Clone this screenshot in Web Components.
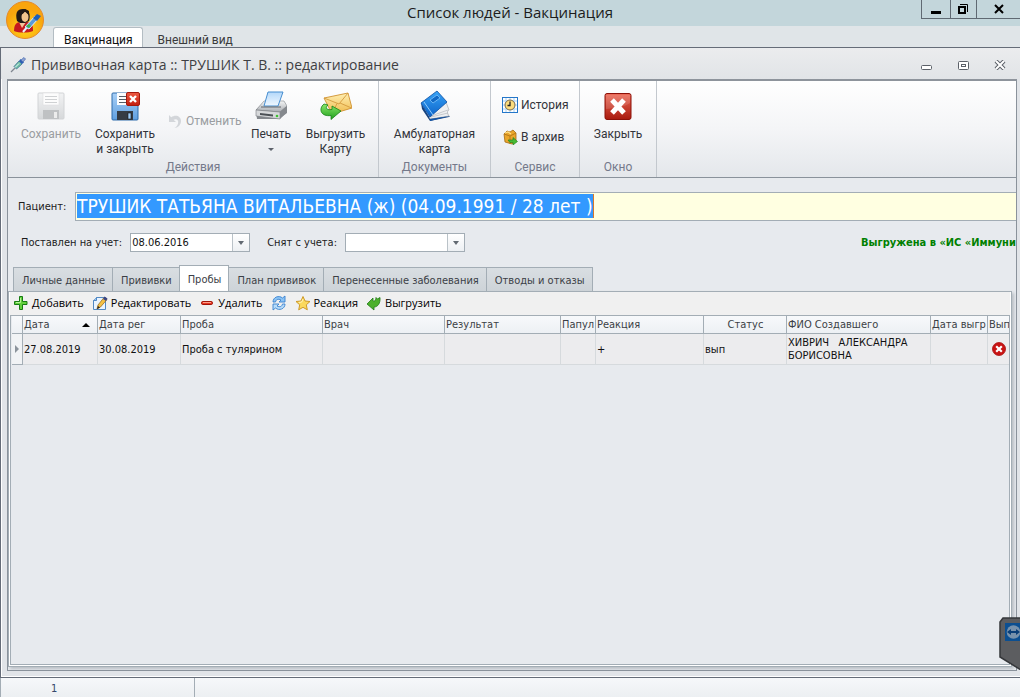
<!DOCTYPE html>
<html lang="ru">
<head>
<meta charset="utf-8">
<title>Список людей - Вакцинация</title>
<style>
  html, body { margin: 0; height: 100%; }
  body {
    --ui: Roboto, "Open Sans", sans-serif;
    --title: "Open Sans", "Noto Sans", sans-serif;
    --form: "DejaVu Sans Condensed", "DejaVu Sans", sans-serif;
    --line: #a3adb5;
    --face: #e7eaee;
    font: 12px/15px var(--ui);
    color: #3b3b3b;
    overflow: hidden;
  }
</style>
</head>
<body>
<app-shell>
  <ui-icon slot="logo" name="person" size="40"></ui-icon>
  <span slot="title">Список людей - Вакцинация</span>
  <app-tab slot="tabs" active>Вакцинация</app-tab>
  <app-tab slot="tabs">Внешний вид</app-tab>

  <card-window>
    <span slot="title">Прививочная карта :: ТРУШИК Т. В. :: редактирование</span>

    <ribbon-bar>
      <ribbon-group label="Действия">
        <ribbon-button icon="save" disabled style="--w:74px">Сохранить</ribbon-button>
        <ribbon-button icon="saveclose" style="--w:74px">Сохранить<br>и закрыть</ribbon-button>
        <ribbon-button icon="undo" small disabled style="--w:81px">Отменить</ribbon-button>
        <ribbon-button icon="print" menu style="--w:56px">Печать</ribbon-button>
        <ribbon-button icon="mail" style="--w:73px">Выгрузить<br>Карту</ribbon-button>
      </ribbon-group>
      <ribbon-group label="Документы">
        <ribbon-button icon="book" style="--w:99px">Амбулаторная<br>карта</ribbon-button>
      </ribbon-group>
      <ribbon-group label="Сервис" stack>
        <ribbon-button icon="history" small style="--w:76px">История</ribbon-button>
        <ribbon-button icon="archive" small style="--w:76px">В архив</ribbon-button>
      </ribbon-group>
      <ribbon-group label="Окно">
        <ribbon-button icon="close" style="--w:64px">Закрыть</ribbon-button>
      </ribbon-group>
    </ribbon-bar>

    <patient-form></patient-form>

    <tab-panel>
      <panel-tab slot="tabs">Личные данные</panel-tab>
      <panel-tab slot="tabs">Прививки</panel-tab>
      <panel-tab slot="tabs" active>Пробы</panel-tab>
      <panel-tab slot="tabs">План прививок</panel-tab>
      <panel-tab slot="tabs">Перенесенные заболевания</panel-tab>
      <panel-tab slot="tabs">Отводы и отказы</panel-tab>
      <tool-button slot="tools" icon="plus">Добавить</tool-button>
      <tool-button slot="tools" icon="edit">Редактировать</tool-button>
      <tool-button slot="tools" icon="minus">Удалить</tool-button>
      <tool-button slot="tools" icon="refresh" title="Обновить"></tool-button>
      <tool-button slot="tools" icon="star">Реакция</tool-button>
      <tool-button slot="tools" icon="export">Выгрузить</tool-button>
      <probe-grid></probe-grid>
    </tab-panel>
  </card-window>

  <span slot="status">1</span>
</app-shell>

<script>
const grad = (id, a, b) =>
  `<linearGradient id="${id}" x1="0" y1="0" x2="0" y2="1"><stop stop-color="${a}"/><stop offset="1" stop-color="${b}"/></linearGradient>`;

const floppy = `<rect x="3" y="3" width="26" height="27" rx="1" fill="url(#fl)" stroke="#2f6cab"/>
  <rect x="8" y="3" width="16" height="12" fill="#fbfcfd"/>
  <path d="M10 6.500H22M10 9.500H22M10 12.500H22" stroke="#555d66"/>
  <rect x="8" y="21" width="16" height="9" fill="#353c44"/><rect x="19" y="23" width="3" height="6" fill="#9ccaf5" stroke="#15191d" stroke-width=".6"/>`;

const ICONS = {
  save: [32, `<defs>${grad('g', '#f2f3f4', '#d6d8da')}</defs><rect x="3" y="3" width="26" height="26" rx="1" fill="url(#g)" stroke="#d2d4d6"/>
    <rect x="8" y="3" width="16" height="12" fill="#fcfcfc" stroke="#dcdddf" stroke-width=".6"/><path d="M10 6.500H22M10 9.500H22M10 12.500H22" stroke="#cfd1d3"/>
    <rect x="8" y="20" width="16" height="9" fill="#bfc1c3"/><rect x="19" y="22" width="3" height="6" fill="#ececec"/>`],
  saveclose: [32, `<defs>${grad('fl', '#a9d0f7', '#5f9fdf')}${grad('rd', '#ee5a42', '#c11d0e')}</defs>${floppy}
    <rect x="17.500" y="2.500" width="13" height="13" rx="1.500" fill="url(#rd)" stroke="#a5180c"/><path d="M21 6l6 6M27 6l-6 6" stroke="#fff" stroke-width="2.400"/>`],
  undo: [16, `<path d="M2 2v7h7L6.500 6.800C9.500 5 12 7 11 10.500 10.500 12.500 9 14 7.500 15 11.500 14.500 14 11.500 14 8 14 3 8.500 1 4.200 4.200z" fill="#d3d6da"/>`],
  print: [32, `<defs>${grad('p', '#f4f5f6', '#a9adb1')}${grad('pp', '#b4d8fa', '#f0f8ff')}</defs>
    <path d="M1 20L9 12h20l3 5v6l-8 6H2z" fill="#85898e"/><path d="M1 20L9 11h20l3 5-7 6z" fill="url(#p)" stroke="#83878b" stroke-width=".6"/>
    <path d="M1 20l24 2v7L1 26z" fill="#d6d8da" stroke="#777b80" stroke-width=".6"/><path d="M25 22l7-6v6l-7 7z" fill="#85898e"/>
    <path d="M13 2h15l-5 14H9z" fill="url(#pp)" stroke="#478ed0"/><path d="M6 17h20" stroke="#60656a"/>
    <path d="M5 23l13 1.500v2L5 25z" fill="#4b5055"/><circle cx="22" cy="26" r="1.300" fill="#3ec232"/>`],
  mail: [32, `<defs>${grad('m', '#fff0b4', '#f0b94a')}${grad('ga', '#8be86b', '#1e9f1c')}</defs>
    <path d="M4 8L28 3l4 15-20 6z" fill="url(#m)" stroke="#cf9130" stroke-width=".9"/><path d="M4 8l15 6 9-11M12 24l5-10.500M31.500 18L20 13" fill="none" stroke="#d49a3d" stroke-width=".9"/>
    <path d="M4 14c-6 5-3 13 7 11.500v4L21 21l-9-5v3.500c-6 1-7-2-4-4.500z" fill="url(#ga)" stroke="#168016" stroke-width=".8"/>`],
  book: [32, `<defs>${grad('bk', '#38a4f7', '#0b62c8')}</defs>
    <path d="M2 13l9 15 20-2-1 1-19 4-8-12z" fill="#17437e"/><path d="M11 29l-1-5 17-12 3 8c-2 1-2 3 0 6z" fill="#eef0f2" stroke="#9b9fa4" stroke-width=".6"/>
    <path d="M12 27l17-4M12 26l17-6" stroke="#b4b8bd" stroke-width=".7"/><path d="M31 26L11 31v-2z" fill="#1456a8"/>
    <path d="M2 13L18 1l10 11-17 15z" fill="url(#bk)" stroke="#0b4fa3" stroke-width=".8"/><path d="M5 12l9 13" stroke="#8fccfb"/><path d="M11 10l7-5 3 3-7 5z" fill="#1169c6" stroke="#7cc2fa" stroke-width=".8"/>`],
  history: [16, `<rect x=".5" y=".5" width="15" height="15" fill="#fff" stroke="#2577c9"/><path d="M1 4h14M1 8h14M1 12h14M4 1v14M8 1v14M12 1v14" stroke="#a6d1f5"/>
    <circle cx="8" cy="8" r="5" fill="#fbdc7c" stroke="#7a6a4a"/><path d="M8 4.500V8.500H5.500" fill="none" stroke="#222" stroke-width="1.300"/>`],
  archive: [16, `<path d="M2 5l3-3 3 1 3-2 3 3v8l-4 3-7-2z" fill="#eaa62b" stroke="#a36a12" stroke-width=".8"/><path d="M2 5l6 2 6-3M8 7v8" fill="none" stroke="#b97a18"/><path d="M3 4l3-1 3 2" fill="none" stroke="#ffe08a" stroke-width="1.200"/>
    <path d="M6 11h5V8.500l4.500 4L11 16v-2.500H8z" fill="#48ba35" stroke="#1b7d17" stroke-width=".6"/>`],
  close: [32, `<defs>${grad('cl', '#ec6b58', '#a91a0e')}</defs><rect x="3" y="3.500" width="26" height="26" rx="2" fill="url(#cl)" stroke="#8c1109"/>
    <path d="M4 5h24v8c-8 5-16 5-24 6z" fill="#fff" opacity=".13"/><path d="M10 10l12 13M22 10L10 23" stroke="#fff" stroke-width="5"/>`],
  plus: [16, `<path d="M6.500 1.500h3v5h4.500v3H9.500v5H6.500v-5H1.500v-3h5z" fill="#62d03d" stroke="#177b13"/><path d="M7.500 3v4.500H3" fill="none" stroke="#b5f397"/>`],
  edit: [16, `<path d="M4.500 2.500h9v12h-12v-9z" fill="#eaf4ff" stroke="#5288c2"/><path d="M4.500 2.500v3h-3" fill="#9cc7ef" stroke="#3472b8" stroke-width=".8"/>
    <path d="M5 14l1-4 6-7.500 3 2L8.500 12z" fill="#f6c143" stroke="#8b5f17" stroke-width=".7"/><path d="M11 4l1.500-2.500 3 2L14 6z" fill="#3c4785"/><path d="M5 14l1-3 2 1.500z" fill="#222"/>`],
  minus: [16, `<rect x="2.500" y="6.500" width="11" height="3" rx="1.300" fill="#e83a25" stroke="#a11408"/><path d="M4 7.500h8" stroke="#ff9f8b"/>`],
  refresh: [16, `<path d="M2 7C2 2 8 0 11.500 3L14 1v6H8l2-2C7 3.500 5 4.500 4.500 7z" fill="#8cc4f5" stroke="#3b82cf" stroke-width=".9"/><path d="M14 9c0 5-6 7-9.500 4L2 15V9h6l-2 2c3 1.500 5 .5 5.500-2z" fill="#b7dcfa" stroke="#3b82cf" stroke-width=".9"/>`],
  star: [16, `<path d="M8 1.500l2 4.500 5 .5-3.700 3.300 1 5L8 12.300l-4.300 2.500 1-5L1 6.500 6 6z" fill="#fbd95c" stroke="#cf9a26"/><path d="M8 4l-1.200 3-3 .5" fill="none" stroke="#fff4b8"/>`],
  export: [16, `<path d="M1 9l6-6v3c2 1 3-2 3-3.500L11.500 4 14 2.500C14.500 8 12 12 8 12v3z" fill="#4cb02b" stroke="#1f7a14" stroke-width=".8"/>`],
  error: [14, `<circle cx="7" cy="7" r="6.500" fill="#c81414" stroke="#a90e0e" stroke-width=".8"/><path d="M4.200 4.200l5.600 5.600M9.800 4.200L4.200 9.800" stroke="#fff" stroke-width="2.200"/>`],
  syringe: [16, `<path d="M1 15l4-4" stroke="#7f8790" stroke-width="1.300"/><path d="M4 9.500L9 4l3 3-5.500 5z" fill="#6fc0a3" stroke="#3f6f94" stroke-width=".8"/><path d="M9 4l1.500-2 3.500 3.500L12 7z" fill="#2c5fb5"/><path d="M11 3l3-2.500L15.500 2 13 5z" fill="#8fa4d5" stroke="#4366ab" stroke-width=".7"/><path d="M5 10.500l4-4" stroke="#e7f6ff"/>`],
  person: [40, `<defs><radialGradient id="or" cy=".7"><stop stop-color="#ffd91c"/><stop offset="1" stop-color="#f9a50d"/></radialGradient></defs>
    <circle cx="20" cy="20" r="18.500" fill="url(#or)" stroke="#e58a2c"/>
    <path d="M9 31c0-6 2-9 7-9h6c5 0 6 3 6 9-5 2-14 2-19 0z" fill="#c51a1f"/><path d="M14 22l3 6 4-6z" fill="#f2c79c"/>
    <path d="M12 21c-2-8 0-12 6-12 6 0 8 5 6 12l-4 2h-5z" fill="#231a16"/><ellipse cx="20" cy="17" rx="3.500" ry="5" fill="#f3c48e"/><path d="M15 15c3-1 4-2 5-4 1 2 3 3 4 4v-4l-4-2-5 2z" fill="#231a16"/>
    <path d="M18 32l5-6" stroke="#e9f3fb" stroke-width="2"/><path d="M20 27l10-11 3 3-9 10z" fill="#5b9ad8" stroke="#dfeefb"/><path d="M28 18l4-4 4 2-4 5z" fill="#1f60b6"/><path d="M21 26l3-2 2 2-2 2z" fill="#42b549"/>`],
  viewer: [21, `<path d="M1 5L4 1H22V53L1 40z" fill="#5c5d60" stroke="#35373a" stroke-width="1.500"/><rect x="6" y="6" width="22" height="18" fill="#0c4f91"/><circle cx="14.500" cy="15" r="6.800" fill="#7892ac"/><path d="M8 15l4-3v2h5v-2l4 3-4 3v-2h-5v2z" fill="#0b3f78"/>`, 53],
};

function define(tag, html, setup) {
  const tpl = document.createElement('template');
  tpl.innerHTML = html;
  customElements.define(tag, class extends HTMLElement {
    constructor() { super(); this.attachShadow({ mode: 'open' }); }
    connectedCallback() {
      if (this.shadowRoot.childNodes.length) return;
      this.shadowRoot.append(tpl.content.cloneNode(true));
      if (setup) setup(this, this.shadowRoot);
    }
  });
}

define('ui-icon', `<style>:host{display:block;flex:none}svg{display:block;overflow:hidden}</style>`, (el, root) => {
  const [w, body, h = w] = ICONS[el.getAttribute('name')];
  const size = +(el.getAttribute('size') || w);
  root.innerHTML += `<svg width="${size}" height="${size * h / w}" viewBox="0 0 ${w} ${h}" aria-hidden="true">${body}</svg>`;
});

define('app-tab', `<style>
  :host{display:block}
  button{display:flex;align-items:flex-start;height:20px;padding:5px 9px 0 10px;border:1px solid transparent;border-bottom:0;border-radius:3px 3px 0 0;background:none;font:12px/15px var(--ui);color:#3b3b3b;box-sizing:border-box}
  :host([active]) button{background:#fff;border-color:#b4bdc3;color:#111}
</style><button type="button" role="tab"><slot></slot></button>`);

define('app-shell', `<style>
  :host{display:flex;flex-direction:column;height:100vh;position:relative;overflow:hidden}
  header{display:grid;grid-template-columns:99px 1fr 99px;height:26px;background:#c3d6db;flex:none}
  h1{margin:0;grid-column:2;text-align:center;font:15px/24px var(--title);color:#1c1c1c}
  .sys{display:flex;height:18px;border:solid #5f6972;border-width:0 0 1px 1px}
  .sys button{flex:28;padding:0;border:0;border-right:1px solid #5f6972;background:none;display:grid;place-items:center}
  .sys button:nth-child(2){flex:26}
  .sys button:last-child{flex:43;border:0}
  nav{display:flex;align-items:flex-end;gap:4px;height:21px;padding-left:53px;background:#e0e5e8;flex:none}
  main{flex:1;min-height:0;display:flex;flex-direction:column}
  footer{display:flex;height:19px;flex:none;background:linear-gradient(#f6f8fa,#eceff2);border-left:1px solid var(--line);color:#34486c;font:11px/21px var(--form)}
  footer div{width:194px;border-right:1px solid var(--line);box-sizing:border-box;padding-left:50px}
  .logo{position:absolute;left:5px;top:0}
  .viewer{position:absolute;right:0;bottom:27px}
</style>
<header><h1><slot name="title"></slot></h1>
  <div class="sys">
    <button type="button" aria-label="Свернуть"><svg width="10" height="10"><path d="M0 7h10v3H0z"/></svg></button>
    <button type="button" aria-label="Восстановить"><svg width="11" height="12"><path d="M1 4h6v6H1z" fill="none" stroke="#000" stroke-width="2"/><path d="M2 1.500h7.500V9" fill="none" stroke="#000"/></svg></button>
    <button type="button" aria-label="Закрыть"><svg width="10" height="10"><path d="M1 1l8 8M9 1L1 9" stroke="#000" stroke-width="2"/></svg></button>
  </div></header>
<nav role="tablist"><slot name="tabs"></slot></nav>
<main><slot></slot></main>
<footer><div><slot name="status"></slot></div></footer>
<div class="logo"><slot name="logo"></slot></div>
<ui-icon class="viewer" name="viewer"></ui-icon>`);

define('card-window', `<style>
  :host{display:flex;flex-direction:column;flex:1;min-height:0;border:solid #656c78;border-width:1px 0 1px 1px;background:#e1e4e8;box-sizing:border-box;box-shadow:inset 1px 1px #fff,inset 0 -1px #fff}
  header{display:flex;align-items:center;gap:5px;height:31px;padding:3px 14px 0 9px;box-sizing:border-box;background:linear-gradient(#ebecee,#e1e4e7);flex:none}
  h2{margin:0;flex:1;font:14px/26px var(--title);color:#3f3f43}
  .win{display:flex;gap:25px;align-items:center}
  button{padding:0;border:0;background:none;display:block}
  svg{display:block}
  section{flex:1;min-height:0;display:flex;flex-direction:column;margin:0 3px 6px 6px;border:1px solid #8a929b;border-top:2px solid #8e949c;background:var(--face);overflow:hidden}
</style>
<header><ui-icon name="syringe"></ui-icon><h2><slot name="title"></slot></h2>
<div class="win">
  <button type="button" aria-label="Свернуть"><svg width="12" height="12"><rect x="1.500" y="6.500" width="10" height="4" rx="1" fill="#fff" stroke="#5b6068"/></svg></button>
  <button type="button" aria-label="Развернуть"><svg width="12" height="10"><rect x="1.500" y="1.500" width="10" height="8" rx="1" fill="#fff" stroke="#5b6068"/><rect x="4.500" y="4.500" width="4" height="2" fill="none" stroke="#5b6068"/></svg></button>
  <button type="button" aria-label="Закрыть"><svg width="12" height="10"><path d="M2 1l8 8M10 1L2 9" stroke="#5b6068" stroke-width="4"/><path d="M2 1l8 8M10 1L2 9" stroke="#fff" stroke-width="2"/></svg></button>
</div></header>
<section><slot></slot></section>`);

define('ribbon-bar', `<style>
  :host{display:flex;height:96px;flex:none;background:linear-gradient(#fff,#f4f5f7 50%,#e4e7eb);border-bottom:1px solid #8a929b}
</style><slot></slot>`);

define('ribbon-group', `<style>
  :host{display:flex;flex-direction:column;padding:0 6px;border-right:1px solid #c3c8ce}
  .items{display:flex;flex:1}
  :host([stack]) .items{flex-direction:column;padding-top:8px}
  :host([stack]){height:96px;box-sizing:border-box}
  .caption{text-align:center;color:#74798a;line-height:20px}
</style><div class="items"><slot></slot></div><div class="caption"></div>`, (el, root) => {
  root.querySelector('.caption').textContent = el.getAttribute('label');
});

define('ribbon-button', `<style>
  :host{display:block;width:var(--w)}
  button{width:100%;height:76px;padding:9px 0 0;border:0;background:none;font:12px/15px var(--ui);color:#32343a;display:flex;flex-direction:column;align-items:center;gap:5px;white-space:nowrap}
  span{text-align:center}
  .arrow{display:none;margin-top:1px;border:solid transparent;border-width:3px 3px 0;border-top-color:#5d626b}
  :host([menu]) .arrow{display:block}
  :host([small]) button{flex-direction:row;height:32px;padding:0 5px;gap:3px}
  :host([small][disabled]) button{height:76px;padding-top:4px}
  :host([disabled]) button{color:#9a9da1}
</style><button type="button"><span><slot></slot></span><i class="arrow"></i></button>`, (el, root) => {
  const b = root.querySelector('button');
  b.disabled = el.hasAttribute('disabled');
  const icon = document.createElement('ui-icon');
  icon.setAttribute('name', el.getAttribute('icon'));
  b.prepend(icon);
});

define('patient-form', `<style>
  :host{display:block;flex:none;padding:14px 0 12px;font:11px/15px var(--form);color:#1b1b1b;overflow:hidden;white-space:nowrap}
  .row{display:flex;align-items:center}
  .patient label{width:57px;padding-left:10px}
  .field{flex:1;height:27px;border:1px solid var(--line);border-right:0;background:#ffffe1;padding-left:1px;display:flex;align-items:flex-start}
  .field input{border:0;border-right:1px solid #d8772b;margin:1px 0 0;padding:0;height:24px;background:#3399ff;color:#fff;font:19px/24px var(--form);field-sizing:content;outline:0}
  .dates{margin-top:12px;padding-left:13px}
  .combo{display:flex;width:118px;height:17px;border:1px solid var(--line);background:#fff;margin:0 17px 0 8px}
  .combo input{flex:1;min-width:0;border:0;padding:0 1px;background:none;font:inherit;color:#111;outline:0}
  .combo button{width:17px;padding:0;border:0;border-left:1px solid #bac2c8;background:linear-gradient(#fff,#edf0f3);display:grid;place-items:center}
  .combo i{border:solid transparent;border-width:4px 3px 0;border-top-color:#626a72}
  .note{margin-left:auto;width:155px;overflow:hidden;font-weight:bold;color:#008000}
</style>
<div class="row patient"><label for="p">Пациент:</label><div class="field"><input id="p" value="ТРУШИК ТАТЬЯНА ВИТАЛЬЕВНА (ж) (04.09.1991 / 28 лет )"></div></div>
<div class="row dates">
  <label for="a">Поставлен на учет:</label><div class="combo"><input id="a" value="08.06.2016"><button type="button" aria-label="Выбрать дату"><i></i></button></div>
  <label for="b">Снят с учета:</label><div class="combo"><input id="b"><button type="button" aria-label="Выбрать дату"><i></i></button></div>
  <div class="note">Выгружена в «ИС «Иммуни</div>
</div>`);

define('panel-tab', `<style>
  :host{display:block}
  button{height:24px;padding:1px 7px 0 8px;border:1px solid var(--line);border-left-width:0;border-bottom:0;background:linear-gradient(#d9dee2,#cdd3d8);font:11px/15px var(--form);color:#3b4046;white-space:nowrap}
  :host(:first-child) button{border-left-width:1px}
  :host([active]) button{height:27px;margin-bottom:-1px;background:#fff;border-left-width:1px;margin-left:-1px}
</style><button type="button" role="tab"><slot></slot></button>`);

define('tool-button', `<style>
  :host{display:block}
  button{display:flex;align-items:center;gap:3px;padding:0;border:0;background:none;font:11px/16px var(--title);color:#000}
</style><button type="button"><slot></slot></button>`, (el, root) => {
  const b = root.querySelector('button');
  if (el.title) b.setAttribute('aria-label', el.title);
  const icon = document.createElement('ui-icon');
  icon.setAttribute('name', el.getAttribute('icon'));
  b.prepend(icon);
});

define('tab-panel', `<style>
  :host{display:flex;flex-direction:column;flex:1;min-height:0;margin:0 4px 3px 0}
  nav{display:flex;align-items:flex-end;padding-left:5px;height:27px;flex:none}
  section{flex:1;min-height:0;display:flex;flex-direction:column;border:1px solid var(--line);background:#fff;padding:0 1px 1px;box-shadow:2px 2px 3px #b9bec4}
  .tools{display:flex;align-items:center;gap:8px;height:22px;background:#f0f0f0;padding:0 0 1px 3px;flex:none}
  .grid{flex:1;min-height:0;border:1px solid var(--line);background:var(--face);overflow:hidden}
</style><nav role="tablist"><slot name="tabs"></slot></nav>
<section><div class="tools" role="toolbar"><slot name="tools"></slot></div><div class="grid"><slot></slot></div></section>`);

define('probe-grid', `<style>
  :host{display:block;font:11px/13px var(--form);padding-left:1px}
  table{width:100%;table-layout:fixed;border-collapse:separate;border-spacing:0;color:#111}
  th,td{box-sizing:border-box;padding:0 0 0 1px;overflow:hidden;white-space:nowrap;text-align:left;font-weight:normal}
  th{height:18px;border:solid var(--line);border-width:0 1px 1px 0;background:linear-gradient(#f7f9fb,#edf0f4);color:#3b3f45}
  td{height:31px;border:solid #d6dadd;border-width:0 1px 1px 0;background:#ececee}
  td:first-child{background:#f1f3f5;border-color:var(--line)}
  th:last-child,td:last-child{border-right:0}
  td:last-child{padding-left:4px}
  .mid{text-align:center}
  .name{white-space:pre-line}
  .sort{display:flex;justify-content:space-between;align-items:center;padding-right:7px}
  .sort i{border:solid transparent;border-width:0 4px 4px;border-bottom-color:#000}
  .cur{display:block;width:0;margin-left:2px;border:solid transparent;border-width:4px 0 4px 4px;border-left-color:#8b939b}
</style>
<table>
<colgroup><col style="width:11px"><col style="width:75px"><col style="width:83px"><col style="width:142px"><col style="width:122px"><col style="width:116px"><col style="width:35px"><col style="width:108px"><col style="width:83px"><col><col style="width:57px"><col style="width:21px"></colgroup>
<thead><tr><th></th><th><div class="sort">Дата<i></i></div></th><th>Дата рег</th><th>Проба</th><th>Врач</th><th>Результат</th><th>Папул</th><th>Реакция</th><th class="mid">Статус</th><th>ФИО Создавшего</th><th>Дата выгр</th><th>Вып</th></tr></thead>
<tbody><tr><td><i class="cur"></i></td><td>27.08.2019</td><td>30.08.2019</td><td>Проба с тулярином</td><td></td><td></td><td></td><td>+</td><td>вып</td><td class="name">ХИВРИЧ &nbsp; АЛЕКСАНДРА
БОРИСОВНА</td><td></td><td><ui-icon name="error"></ui-icon></td></tr></tbody>
</table>`);
</script>
</body>
</html>
